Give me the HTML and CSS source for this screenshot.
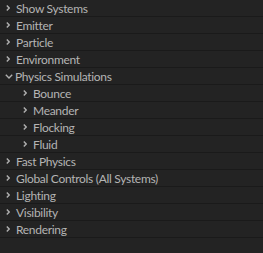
FILE: index.html
```html
<!DOCTYPE html>
<html lang="en">
<head>
    <meta charset="UTF-8">
    <title>Effect Controls</title>
    <link rel="stylesheet" href="styles.css">
</head>
<body>
    <ul class="tree">
        <li class="row"><svg class="chev" viewBox="0 0 4 6"><path d="M0.8 0.6 L3.2 3 L0.8 5.4"/></svg>Show Systems</li>
        <li class="row"><svg class="chev" viewBox="0 0 4 6"><path d="M0.8 0.6 L3.2 3 L0.8 5.4"/></svg>Emitter</li>
        <li class="row"><svg class="chev" viewBox="0 0 4 6"><path d="M0.8 0.6 L3.2 3 L0.8 5.4"/></svg>Particle</li>
        <li class="row"><svg class="chev" viewBox="0 0 4 6"><path d="M0.8 0.6 L3.2 3 L0.8 5.4"/></svg>Environment</li>
        <li class="row open"><svg class="chev down" viewBox="0 0 8 5"><path d="M0.8 0.8 L4 4 L7.2 0.8"/></svg>Physics Simulations</li>
        <li class="row sub"><svg class="chev" viewBox="0 0 4 6"><path d="M0.8 0.6 L3.2 3 L0.8 5.4"/></svg>Bounce</li>
        <li class="row sub"><svg class="chev" viewBox="0 0 4 6"><path d="M0.8 0.6 L3.2 3 L0.8 5.4"/></svg>Meander</li>
        <li class="row sub"><svg class="chev" viewBox="0 0 4 6"><path d="M0.8 0.6 L3.2 3 L0.8 5.4"/></svg>Flocking</li>
        <li class="row sub"><svg class="chev" viewBox="0 0 4 6"><path d="M0.8 0.6 L3.2 3 L0.8 5.4"/></svg>Fluid</li>
        <li class="row"><svg class="chev" viewBox="0 0 4 6"><path d="M0.8 0.6 L3.2 3 L0.8 5.4"/></svg>Fast Physics</li>
        <li class="row"><svg class="chev" viewBox="0 0 4 6"><path d="M0.8 0.6 L3.2 3 L0.8 5.4"/></svg>Global Controls (All Systems)</li>
        <li class="row"><svg class="chev" viewBox="0 0 4 6"><path d="M0.8 0.6 L3.2 3 L0.8 5.4"/></svg>Lighting</li>
        <li class="row"><svg class="chev" viewBox="0 0 4 6"><path d="M0.8 0.6 L3.2 3 L0.8 5.4"/></svg>Visibility</li>
        <li class="row"><svg class="chev" viewBox="0 0 4 6"><path d="M0.8 0.6 L3.2 3 L0.8 5.4"/></svg>Rendering</li>
    </ul>
</body>
</html>
```

FILE: styles.css
```css
body {
    margin: 0;
    background: #232323;
    font-family: Lato, sans-serif;
    font-size: 12px;
    letter-spacing: -0.3px;
    color: #b4b4b4;
}

.tree {
    list-style: none;
    margin: 0;
    padding: 0;
}

.row {
    display: flex;
    align-items: center;
    height: 16px;
    border-bottom: 1px solid #1a1a1a;
    padding-left: 6px;
    white-space: nowrap;
}

.chev {
    width: 4px;
    height: 6px;
    margin-right: 6px;
    flex-shrink: 0;
}

.chev path {
    fill: none;
    stroke: #b0b0b0;
    stroke-width: 1.4;
}

.chev.down {
    width: 8px;
    height: 5px;
    margin-left: -1px;
    margin-right: 2px;
}

.sub {
    padding-left: 23px;
}
```
